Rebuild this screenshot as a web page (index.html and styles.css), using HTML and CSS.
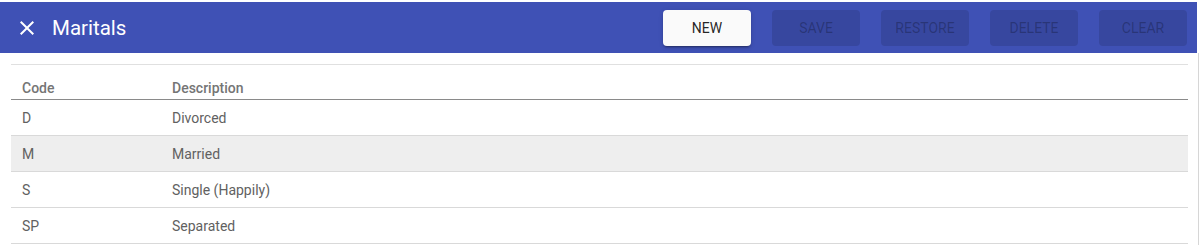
FILE: index.html
```html
<!DOCTYPE html>
<html lang="en">
<head>
    <meta charset="UTF-8">
    <meta name="viewport" content="width=device-width, initial-scale=1.0">
    <title>Maritals</title>
    <link rel="stylesheet" href="styles.css">
</head>
<body>

    <div class="shell">
        <div class="content">

            <!-- Toolbar -->
            <div class="toolbar">
                <button class="close-btn" aria-label="Close">
                    <svg width="24" height="24" viewBox="0 0 24 24">
                        <path d="M19 6.41L17.59 5 12 10.59 6.41 5 5 6.41 10.59 12 5 17.59 6.41 19 12 13.41 17.59 19 19 17.59 13.41 12z" fill="#fff"/>
                    </svg>
                </button>
                <h1 class="title">Maritals</h1>
                <div class="actions">
                    <button class="btn primary">New</button>
                    <button class="btn" disabled>Save</button>
                    <button class="btn" disabled>Restore</button>
                    <button class="btn" disabled>Delete</button>
                    <button class="btn" disabled>Clear</button>
                </div>
            </div>

            <!-- Table -->
            <div class="table-wrap">
                <table class="code-table">
                    <thead>
                        <tr>
                            <th class="col-code">Code</th>
                            <th>Description</th>
                        </tr>
                    </thead>
                    <tbody>
                        <tr>
                            <td class="col-code">D</td>
                            <td>Divorced</td>
                        </tr>
                        <tr class="selected">
                            <td class="col-code">M</td>
                            <td>Married</td>
                        </tr>
                        <tr>
                            <td class="col-code">S</td>
                            <td>Single (Happily)</td>
                        </tr>
                        <tr>
                            <td class="col-code">SP</td>
                            <td>Separated</td>
                        </tr>
                    </tbody>
                </table>
            </div>
        </div>
        <div class="edge"></div>
    </div>

</body>
</html>
```

FILE: styles.css
```css
body {
    font-family: Roboto, "Noto Sans", sans-serif;
    background-color: #fff;
    margin: 0;
    padding: 2px 0 0 0;
}

.shell {
    display: flex;
}

.content {
    width: 1197px;
}

.edge {
    width: 1px;
    margin-left: 1px;
    margin-top: 51px;
    height: 200px;
    background-color: #d6d6d6;
}

/* Toolbar */
.toolbar {
    display: flex;
    align-items: center;
    height: 51px;
    padding: 0 10px 0 15px;
    background-color: #3f51b5;
    color: #fff;
}

.close-btn {
    display: flex;
    padding: 0;
    border: none;
    background: none;
    cursor: pointer;
}

.title {
    margin: 0 0 0 13px;
    font-size: 20.5px;
    font-weight: 400;
}

.actions {
    display: flex;
    gap: 21px;
    margin-left: auto;
}

.btn {
    width: 88px;
    height: 36px;
    border: none;
    border-radius: 4px;
    font-family: inherit;
    font-size: 14px;
    font-weight: 400;
    text-transform: uppercase;
    background-color: rgba(0, 0, 0, 0.12);
    color: rgba(0, 0, 0, 0.26);
}

.btn.primary {
    background-color: #fafafa;
    color: rgba(0, 0, 0, 0.87);
    box-shadow: 0 3px 1px -2px rgba(0, 0, 0, 0.2), 0 2px 2px 0 rgba(0, 0, 0, 0.14), 0 1px 5px 0 rgba(0, 0, 0, 0.12);
    cursor: pointer;
}

/* Table */
.table-wrap {
    padding: 11px 9px 0 11px;
}

.code-table {
    width: 100%;
    border-collapse: collapse;
    border-top: 1px solid #e0e0e0;
}

.code-table th, .code-table td {
    text-align: left;
    padding: 0 11px;
}

.code-table th {
    height: 35px;
    padding-top: 12px;
    padding-bottom: 0;
    box-sizing: border-box;
    font-size: 14px;
    font-weight: 500;
    color: #757575;
    border-bottom: 1px solid #8a8a8a;
}

.code-table td {
    height: 35px;
    font-size: 14px;
    color: #616161;
    border-bottom: 1px solid #d9d9d9;
}

.code-table .col-code {
    width: 128px;
}

.code-table tr.selected td {
    background-color: #eeeeee;
}
```
